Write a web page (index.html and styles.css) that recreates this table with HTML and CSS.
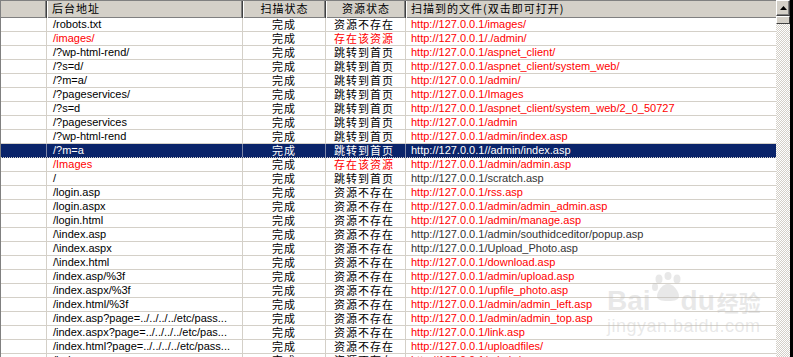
FILE: index.html
```html
<!DOCTYPE html>
<html lang="zh-CN">
<head>
<meta charset="utf-8">
<title>扫描结果</title>
<link rel="stylesheet" href="styles.css">
</head>
<body>
<div class="window">
  <div class="list">
    <div class="head">
      <div class="hc c0"></div>
      <div class="hc c1">后台地址</div>
      <div class="hc c2">扫描状态</div>
      <div class="hc c3">资源状态</div>
      <div class="hc c4">扫描到的文件(双击即可打开)</div>
    </div>
    <div class="rows">
      <div class="row"><span></span><span class="p">/robots.txt</span><span class="s">完成</span><span class="r">资源不存在</span><span class="u red">http://127.0.0.1/images/</span></div>
      <div class="row"><span></span><span class="p red">/images/</span><span class="s">完成</span><span class="r red">存在该资源</span><span class="u red">http://127.0.0.1/./admin/</span></div>
      <div class="row"><span></span><span class="p">/?wp-html-rend/</span><span class="s">完成</span><span class="r">跳转到首页</span><span class="u red">http://127.0.0.1/aspnet_client/</span></div>
      <div class="row"><span></span><span class="p">/?s=d/</span><span class="s">完成</span><span class="r">跳转到首页</span><span class="u red">http://127.0.0.1/aspnet_client/system_web/</span></div>
      <div class="row"><span></span><span class="p">/?m=a/</span><span class="s">完成</span><span class="r">跳转到首页</span><span class="u red">http://127.0.0.1/admin/</span></div>
      <div class="row"><span></span><span class="p">/?pageservices/</span><span class="s">完成</span><span class="r">跳转到首页</span><span class="u red">http://127.0.0.1/Images</span></div>
      <div class="row"><span></span><span class="p">/?s=d</span><span class="s">完成</span><span class="r">跳转到首页</span><span class="u red">http://127.0.0.1/aspnet_client/system_web/2_0_50727</span></div>
      <div class="row"><span></span><span class="p">/?pageservices</span><span class="s">完成</span><span class="r">跳转到首页</span><span class="u red">http://127.0.0.1/admin</span></div>
      <div class="row"><span></span><span class="p">/?wp-html-rend</span><span class="s">完成</span><span class="r">跳转到首页</span><span class="u red">http://127.0.0.1/admin/index.asp</span></div>
      <div class="row sel"><span></span><span class="p">/?m=a</span><span class="s">完成</span><span class="r">跳转到首页</span><span class="u">http://127.0.0.1//admin/index.asp</span></div>
      <div class="row"><span></span><span class="p red">/Images</span><span class="s">完成</span><span class="r red">存在该资源</span><span class="u red">http://127.0.0.1/admin/admin.asp</span></div>
      <div class="row"><span></span><span class="p">/</span><span class="s">完成</span><span class="r">跳转到首页</span><span class="u gray">http://127.0.0.1/scratch.asp</span></div>
      <div class="row"><span></span><span class="p">/login.asp</span><span class="s">完成</span><span class="r">资源不存在</span><span class="u red">http://127.0.0.1/rss.asp</span></div>
      <div class="row"><span></span><span class="p">/login.aspx</span><span class="s">完成</span><span class="r">资源不存在</span><span class="u red">http://127.0.0.1/admin/admin_admin.asp</span></div>
      <div class="row"><span></span><span class="p">/login.html</span><span class="s">完成</span><span class="r">资源不存在</span><span class="u red">http://127.0.0.1/admin/manage.asp</span></div>
      <div class="row"><span></span><span class="p">/\index.asp</span><span class="s">完成</span><span class="r">资源不存在</span><span class="u gray">http://127.0.0.1/admin/southidceditor/popup.asp</span></div>
      <div class="row"><span></span><span class="p">/\index.aspx</span><span class="s">完成</span><span class="r">资源不存在</span><span class="u gray">http://127.0.0.1/Upload_Photo.asp</span></div>
      <div class="row"><span></span><span class="p">/\index.html</span><span class="s">完成</span><span class="r">资源不存在</span><span class="u red">http://127.0.0.1/download.asp</span></div>
      <div class="row"><span></span><span class="p">/index.asp/%3f</span><span class="s">完成</span><span class="r">资源不存在</span><span class="u red">http://127.0.0.1/admin/upload.asp</span></div>
      <div class="row"><span></span><span class="p">/index.aspx/%3f</span><span class="s">完成</span><span class="r">资源不存在</span><span class="u red">http://127.0.0.1/upfile_photo.asp</span></div>
      <div class="row"><span></span><span class="p">/index.html/%3f</span><span class="s">完成</span><span class="r">资源不存在</span><span class="u red">http://127.0.0.1/admin/admin_left.asp</span></div>
      <div class="row"><span></span><span class="p">/index.asp?page=../../../../etc/pass...</span><span class="s">完成</span><span class="r">资源不存在</span><span class="u red">http://127.0.0.1/admin/admin_top.asp</span></div>
      <div class="row"><span></span><span class="p">/index.aspx?page=../../../../etc/pas...</span><span class="s">完成</span><span class="r">资源不存在</span><span class="u red">http://127.0.0.1/link.asp</span></div>
      <div class="row"><span></span><span class="p">/index.html?page=../../../../etc/pass...</span><span class="s">完成</span><span class="r">资源不存在</span><span class="u red">http://127.0.0.1/uploadfiles/</span></div>
      <div class="row"><span></span><span class="p">/index.asp</span><span class="s">完成</span><span class="r">资源不存在</span><span class="u red">http://127.0.0.1/admin/</span></div>
    </div>
    <div class="watermark">
      <div class="wm-top">
        <span class="wm-bai">Bai</span>
        <svg class="paw" width="34" height="30" viewBox="0 0 34 30">
          <ellipse cx="8" cy="7" rx="3.5" ry="4.5" />
          <ellipse cx="17" cy="4" rx="3.5" ry="4" />
          <ellipse cx="26" cy="7" rx="3.5" ry="4.5" />
          <ellipse cx="4" cy="15" rx="3" ry="4" />
          <path d="M17 12c-6 0-11 8-11 12 0 4 4 5 11 5s11-1 11-5c0-4-5-12-11-12z" />
        </svg>
        <span class="wm-du">du</span>
        <span class="wm-jy">经验</span>
      </div>
      <div class="wm-url">jingyan.baidu.com</div>
    </div>
  </div>
  <div class="scrollbar">
    <div class="sb-btn"><svg width="7" height="4" viewBox="0 0 7 4"><path d="M3.5 0L7 4H0z" fill="#000"/></svg></div>
    <div class="sb-thumb"></div>
    <div class="sb-track"></div>
  </div>
  <div class="edge"></div>
</div>
</body>
</html>
```

FILE: styles.css
```css
* { box-sizing: border-box; }
html, body { margin: 0; padding: 0; background: #fff; }
body {
  width: 793px;
  height: 357px;
  overflow: hidden;
  font-family: "Liberation Sans", "Noto Sans CJK SC", sans-serif;
  font-size: 11px;
  color: #000;
}
.window {
  display: flex;
  width: 793px;
  height: 357px;
}
.list {
  position: relative;
  width: 776px;
  height: 357px;
  overflow: hidden;
  border-left: 1px solid #808080;
  background: #fff;
}
.head {
  display: grid;
  grid-template-columns: 46px 196px 83px 80px 370px;
  height: 18px;
  background: #d4d0c8;
  border-top: 1px solid #808080;
  border-bottom: 1px solid #404040;
}
.hc {
  height: 17px;
  line-height: 15px;
  font-family: "Noto Sans CJK SC", "Liberation Sans", sans-serif;
  font-size: 11px;
  letter-spacing: 1px;
  border-left: 1px solid #fff;
  border-right: 1px solid #404040;
  box-shadow: inset -1px -1px 0 #808080;
  white-space: nowrap;
  overflow: hidden;
}
.hc.c0 { border-left: 0; }
.hc.c1 { padding-left: 4px; }
.hc.c2, .hc.c3 { text-align: center; }
.hc.c4 { padding-left: 4px; border-right: 0; box-shadow: inset 0 -1px 0 #808080; }
.rows { display: flex; flex-direction: column; }
.row {
  display: grid;
  grid-template-columns: 46px 196px 83px 80px 370px;
  height: 14px;
  border-bottom: 1px solid #d4d0c8;
}
.row > span {
  height: 13px;
  line-height: 13px;
  white-space: nowrap;
  overflow: hidden;
  border-right: 1px solid #d4d0c8;
}
.row > span:last-child { border-right: 0; }
.row .p { padding-left: 6px; }
.row .s, .row .r {
  text-align: center;
  font-family: "Noto Sans CJK SC", "Liberation Sans", sans-serif;
  font-size: 11px;
  letter-spacing: 1px;
}
.row .r { text-align: left; padding-left: 8px; }
.row .u { padding-left: 5px; }
.red { color: #ff0000; }
.gray { color: #333; }
.row.sel {
  background: #0a246a;
  border-bottom: 1px dotted #d4d0c8;
}
.row.sel > span { color: #fff; border-right-color: #7d86a8; }
.watermark {
  position: absolute;
  left: 606px;
  top: 266px;
  color: rgba(190, 190, 190, 0.35);
  pointer-events: none;
}
.wm-top { display: flex; align-items: flex-end; height: 50px; }
.wm-bai, .wm-du {
  font-family: "Liberation Sans", sans-serif;
  font-weight: bold;
  font-size: 28px;
  line-height: 30px;
}
.paw { fill: rgba(190, 190, 190, 0.35); margin: 0 -4px 14px 0; }
.wm-jy {
  font-family: "Noto Sans CJK SC", sans-serif;
  font-weight: bold;
  font-size: 22px;
  line-height: 30px;
  margin-left: 2px;
}
.wm-url {
  font-family: "Liberation Sans", sans-serif;
  font-size: 18px;
  line-height: 20px;
  letter-spacing: 0.5px;
}
.scrollbar {
  width: 14px;
  height: 357px;
  display: flex;
  flex-direction: column;
}
.sb-btn {
  height: 16px;
  background: #d4d0c8;
  border-top: 1px solid #fff;
  border-left: 1px solid #fff;
  border-right: 1px solid #404040;
  border-bottom: 1px solid #404040;
  box-shadow: inset -1px -1px 0 #808080;
  display: flex;
  align-items: center;
  justify-content: center;
}
.sb-thumb {
  height: 8px;
  background: #d4d0c8;
  border-top: 1px solid #fff;
  border-left: 1px solid #fff;
  border-right: 1px solid #404040;
  border-bottom: 1px solid #404040;
}
.sb-track {
  flex: 1;
  background: repeating-conic-gradient(#d4d0c8 0 25%, #fff 0 50%) 0 0 / 2px 2px;
}
.edge { width: 3px; height: 357px; background: #000; }
```
